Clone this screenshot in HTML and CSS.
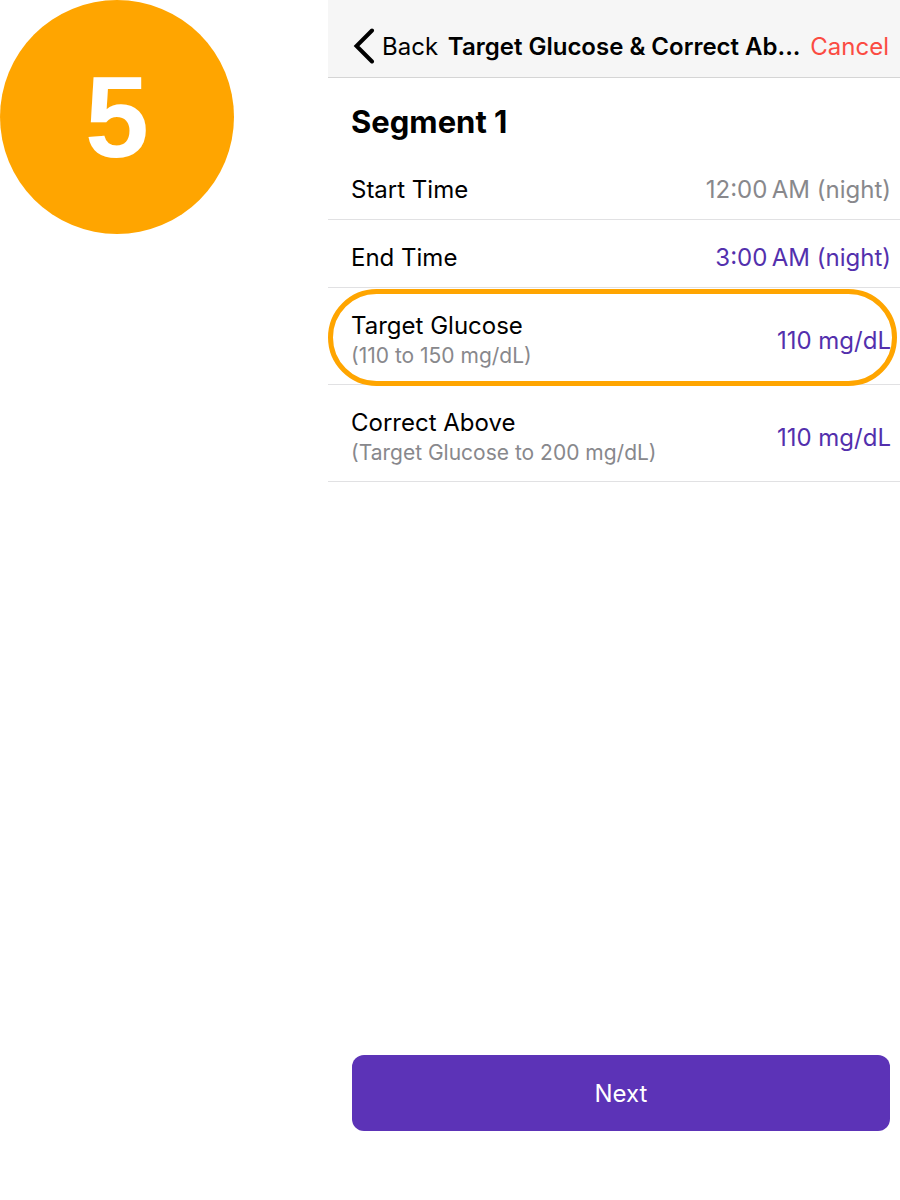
FILE: index.html
```html
<!DOCTYPE html>
<html lang="en">
<head>
    <meta charset="UTF-8">
    <meta name="viewport" content="width=device-width, initial-scale=1.0">
    <title>Target Glucose &amp; Correct Above</title>
    <link rel="stylesheet" href="styles.css">
</head>
<body>

<div class="step">
    <div class="step-number">5</div>

    <main class="screen">
        <header class="navbar">
            <button type="button" class="back">
                <svg width="22" height="36" viewBox="0 0 22 36" aria-hidden="true">
                    <path d="M19 2.5 L3.5 18 L19 33.5" fill="none" stroke="#000" stroke-width="4" stroke-linecap="round" stroke-linejoin="miter"/>
                </svg>
                Back
            </button>
            <h1>Target Glucose &amp; Correct Ab...</h1>
            <button type="button" class="cancel">Cancel</button>
        </header>

        <h2>Segment 1</h2>

        <div class="row">
            <div class="label">Start Time</div>
            <div class="value">12:00&#8201;AM (night)</div>
        </div>
        <div class="row">
            <div class="label" id="endTime">End Time</div>
            <button type="button" class="value" aria-describedby="endTime">3:00&#8201;AM (night)</button>
        </div>
        <div class="row highlight">
            <div>
                <div class="label" id="targetGlucose">Target Glucose</div>
                <div class="range">(110 to 150 mg/dL)</div>
            </div>
            <button type="button" class="value" aria-describedby="targetGlucose">110 mg/dL</button>
        </div>
        <div class="row">
            <div>
                <div class="label" id="correctAbove">Correct Above</div>
                <div class="range">(Target Glucose to 200 mg/dL)</div>
            </div>
            <button type="button" class="value" aria-describedby="correctAbove">110 mg/dL</button>
        </div>

        <button type="button" class="next">Next</button>
    </main>
</div>

</body>
</html>
```
FILE: styles.css
```css
* {
    box-sizing: border-box;
}

body {
    margin: 0;
    background-color: #fff;
    color: #000;
    font-family: Inter, "Liberation Sans", sans-serif;
    font-size: 24px;
    line-height: 31px;
}

button {
    padding: 0;
    border: none;
    background: none;
    color: inherit;
    font: inherit;
    white-space: nowrap;
    cursor: pointer;
}

.step {
    display: grid;
    grid-template-columns: 234px 1fr;
    column-gap: 94px;
    min-height: 100vh;
}

.step-number {
    display: flex;
    align-items: center;
    justify-content: center;
    height: 234px;
    border-radius: 50%;
    background-color: #ffa500;
    color: #fff;
    font-family: "Liberation Sans", Arial, sans-serif;
    font-size: 115px;
    font-weight: bold;
    line-height: 116px;
}

.screen {
    display: flex;
    flex-direction: column;
    min-width: 0;
}

/* top bar */
.navbar {
    display: flex;
    align-items: center;
    justify-content: space-between;
    padding: 28px 11px 13px 25px;
    border-bottom: 1px solid #d5d5d5;
    background-color: #f6f6f6;
}

.back {
    display: flex;
    align-items: center;
    gap: 7px;
}

h1 {
    margin: 0;
    font-size: 24px;
    font-weight: 600;
    white-space: nowrap;
}

.cancel {
    color: #fb4b42;
}

h2 {
    margin: 0;
    padding: 24px 23px 10px;
    font-size: 31px;
    font-weight: 700;
    line-height: 40px;
}

/* setting rows */
.row {
    position: relative;
    display: flex;
    align-items: center;
    justify-content: space-between;
    padding: 22px 9px 14px 23px;
    border-bottom: 1px solid #e1e1e3;
}

.range {
    color: #88888c;
    font-size: 21px;
    line-height: 29px;
}

.value {
    color: #88888c;
}

button.value {
    color: #5330ad;
}

/* orange ring drawn over the row */
.highlight::after {
    content: "";
    position: absolute;
    inset: 1px 3px -2px 0;
    border: 5px solid #ffa500;
    border-radius: 49px;
    pointer-events: none;
}

.next {
    height: 76px;
    margin: auto 10px 69px 24px;
    border-radius: 12px;
    background-color: #5c33b7;
    color: #fff;
}
```
